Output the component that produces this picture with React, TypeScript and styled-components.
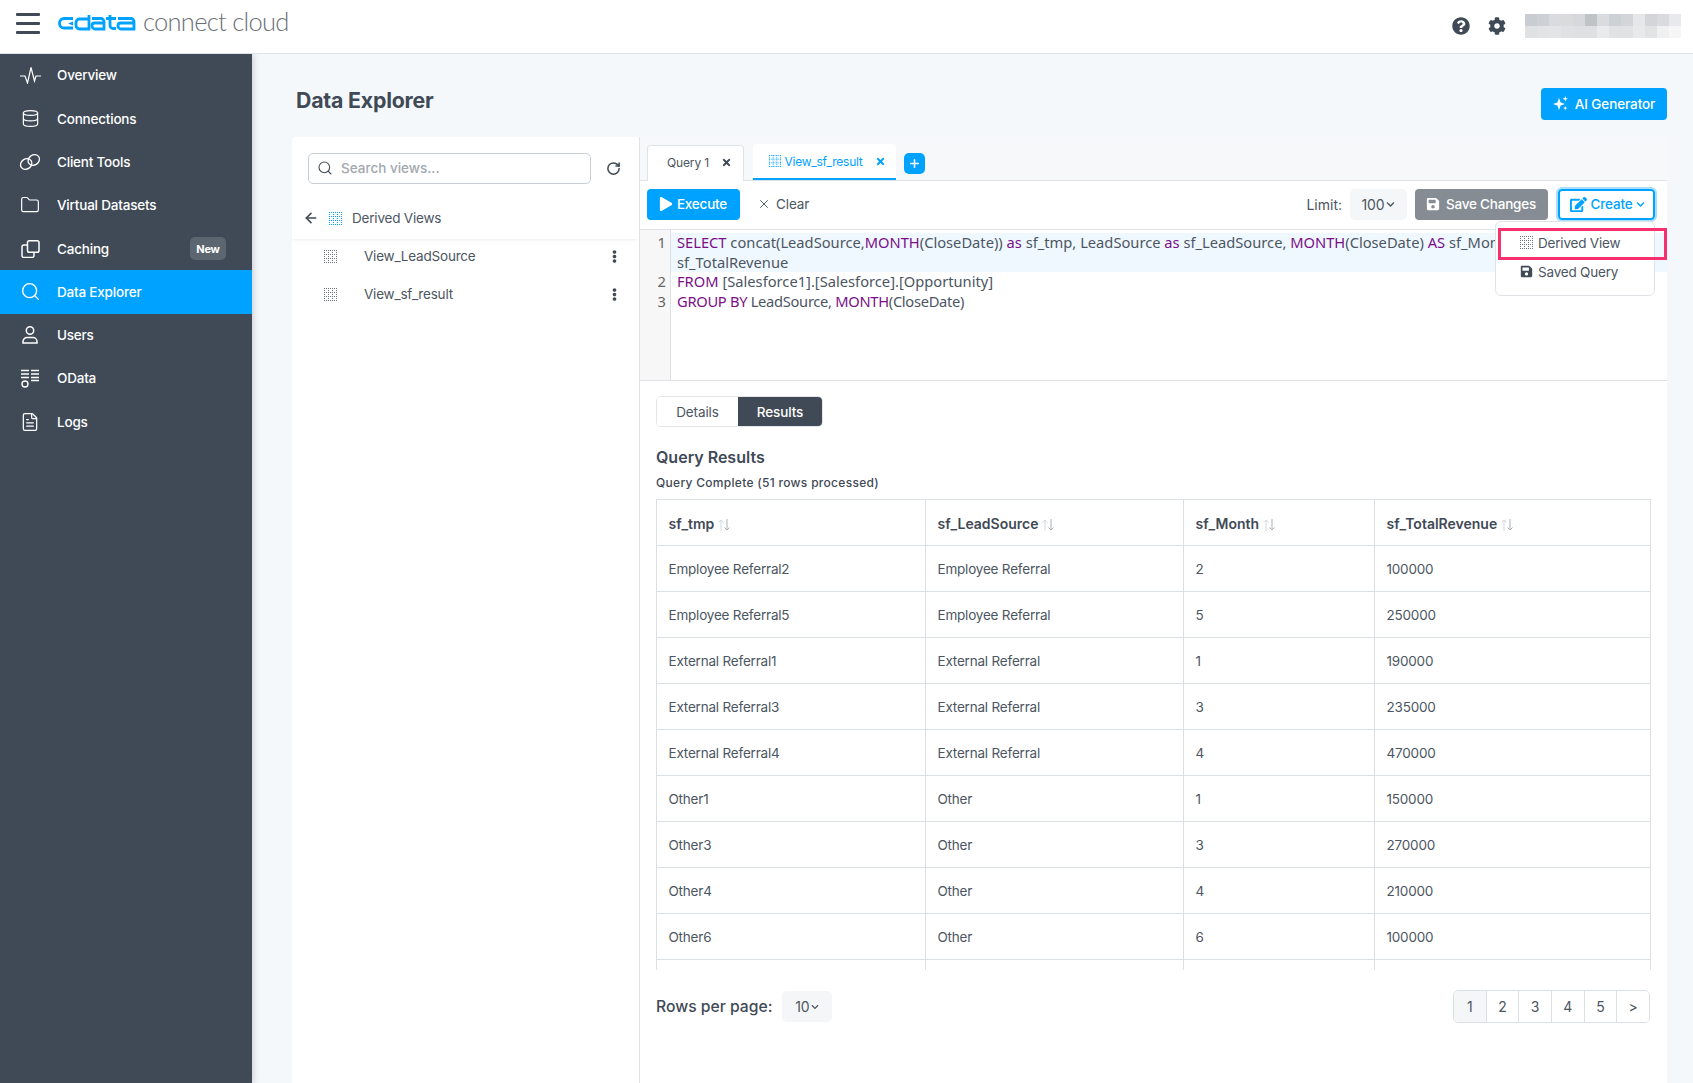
import React from "react";
import styled, { createGlobalStyle } from "styled-components";
import { Database, Folder, Search, FileText, X, ArrowLeft, RotateCw, Plus } from "lucide-react";
import { FaQuestionCircle, FaCog, FaSave, FaEdit, FaPlay, FaTimes, FaEllipsisV, FaChevronDown } from "react-icons/fa";

const Global = createGlobalStyle`
  html, body { margin: 0; padding: 0; height: 100%; background: #f5f8fb; }
  body { font-family: Inter, "Liberation Sans", sans-serif; color: #3f4a56; overflow: hidden; }
  * { box-sizing: border-box; }
`;

const Page = styled.div`
  width: 1693px; height: 1083px; display: flex; flex-direction: column; overflow: hidden; position: relative;
`;
const Header = styled.header`
  height: 54px; flex: none; background: #fff; border-bottom: 1px solid #dfe3e8;
  display: flex; align-items: center; padding: 0 12px 2px 16px; position: relative; z-index: 2;
`;
const Burger = styled.div`
  width: 24px; height: 21px; display: flex; flex-direction: column; justify-content: space-between;
  margin-top: -5px;
  span { display: block; height: 3px; border-radius: 1px; background: #3f4a56; }
`;
const LogoWrap = styled.div`display: flex; align-items: center; margin-left: 18px; height: 40px; margin-top: -5px;`;
const LogoText = styled.span`
  font-family: Lato, sans-serif; font-weight: 300; font-size: 25.5px; letter-spacing: -0.72px; color: #6a7077; margin-left: 7px; margin-top: -5px;
`;
const HeaderRight = styled.div`margin-left: auto; display: flex; align-items: center; color: #3f4a56;`;
const HeadIcon = styled.span`display: flex; width: 18px; margin-right: 18px; font-size: 18px;`;
const Mosaic = styled.div`
  width: 156px; height: 24px; margin-left: 1px; display: grid; grid-template-columns: repeat(13, 12px); grid-auto-rows: 12px;
`;
const MosaicCell = styled.i<{ $c: string }>`background: ${p => p.$c}; display: block;`;

const Body = styled.div`flex: 1; display: flex; min-height: 0;`;
const Sidebar = styled.nav`
  width: 252px; flex: none; background: #3f4a56; display: flex; flex-direction: column; box-shadow: 2px 0 6px rgba(40,50,60,.18); z-index: 1;
`;
const NavItem = styled.div<{ $active?: boolean }>`
  height: 43.3px; display: flex; align-items: center; padding: 0 26px .5px 19px;
  background: ${p => p.$active ? "#00a2ff" : "transparent"}; color: #fff; font-size: 13.5px; font-weight: 450; letter-spacing: -0.2px;
`;
const NavIcon = styled.span`width: 22px; margin-right: 16px; display: flex; justify-content: center; align-items: center;`;
const Badge = styled.span`
  margin-left: auto; width: 36px; height: 23px; border-radius: 5px; background: #5c6670; font-size: 11px; font-weight: 700; display: flex; align-items: center; justify-content: center;
`;

const Main = styled.main`flex: 1; min-width: 0; padding: 0 26px 0 40px; display: flex; flex-direction: column;`;
const TitleRow = styled.div`height: 83px; flex: none; display: flex; align-items: center; justify-content: space-between; padding: 0 0 0 4px;`;
const Title = styled.h1`font-size: 21.3px; font-weight: 700; margin: 9px 0 0; color: #3f4a56; letter-spacing: -0.2px;`;
const AIButton = styled.button`
  height: 32px; width: 126px; border: 0; border-radius: 4px; background: #00a2ff; color: #fff; font: 500 13.5px Inter, sans-serif; letter-spacing: -0.1px;
  display: flex; align-items: center; justify-content: center; gap: 7px; margin-top: 17px; padding: 0 0 1px;
`;
const Panels = styled.div`flex: 1; min-height: 0; display: grid; grid-template-columns: 348px 1fr; background: #fff; border-radius: 4px 4px 0 0;`;

const Left = styled.aside`border-right: 1px solid #dfe3e8; display: flex; flex-direction: column;`;
const SearchRow = styled.div`display: flex; align-items: center; padding: 16px 18px 0 16px; justify-content: space-between;`;
const SearchBox = styled.div`
  width: 283px; height: 31px; border: 1px solid #c9ced4; border-radius: 5px; display: flex; align-items: center; padding: 0 8px 1px; gap: 8px;
  color: #a2a8ae; font-size: 13.5px; font-weight: 500;
  svg { color: #3f4a56; }
`;
const ViewsHead = styled.div`
  height: 38px; margin-top: 17px; display: flex; align-items: center; padding: 0 0 4px 11px; font-size: 13.5px; letter-spacing: -0.2px; color: #4c5662;
  box-shadow: 0 3px 3px -2px rgba(60,70,80,.1);
`;
const HeadIconSlot = styled.span`margin-left: 10px; display: flex;`;
const ViewName = styled.span`margin-left: 10px;`;
const ViewItem = styled.div`
  height: 38px; display: flex; align-items: center; padding: 0 18px 0 32px; font-size: 13.5px; letter-spacing: -0.2px; color: #4c5662;
`;
const ViewItemName = styled.span`margin-left: 27px; flex: 1;`;
const ViewList = styled.div`margin-top: -2px;`;

const Right = styled.section`display: flex; flex-direction: column; min-width: 0; position: relative;`;
const TabStrip = styled.div`
  height: 44px; flex: none; background: #f7f8f9; border-bottom: 1px solid #dfe3e8; padding: 8px 0 0 7px; display: flex; align-items: flex-start; border-radius: 0 4px 0 0;
`;
const Tab = styled.div<{ $active?: boolean }>`
  height: 36px; background: #fff; display: flex; align-items: center; justify-content: center; font-size: 12px; border-radius: 4px 4px 0 0;
  ${p => p.$active
    ? "width: 143px; margin-left: 9px; color: #00a2ff; border-bottom: 2px solid #00a2ff; margin-top:-1px; gap: 4px; padding-left: 5px; letter-spacing: -0.25px;"
    : "width: 97px; color: #4c5662; border: 1px solid #dfe3e8; border-bottom: 0; gap: 12px; padding: 0 0 2px 8px; letter-spacing: -0.15px;"}
`;
const TabClose = styled.span`margin-left: 8px; display: flex;`;
const AddTab = styled.button`
  width: 21px; height: 21px; margin: 8px 0 0 8px; background: #00a2ff; border: 0; border-radius: 5px; color: #fff; display: flex; align-items: center; justify-content: center; padding: 0;
`;
const Toolbar = styled.div`height: 49px; flex: none; display: flex; align-items: center; padding: 0 12px 2px 7px; border-bottom: 1px solid #dfe3e8;`;
const Execute = styled.button`
  width: 93px; height: 31px; border: 0; border-radius: 4px; background: #00a2ff; color: #fff; font: 500 13.5px Inter, sans-serif; letter-spacing: -0.2px;
  display: flex; align-items: center; justify-content: center; gap: 4px; padding: 0 1px 0 0;
`;
const Clear = styled.button`
  margin-left: 17px; background: none; border: 0; color: #4c5662; font: 400 13.5px Inter, sans-serif; letter-spacing: -0.1px; display: flex; align-items: center; gap: 5px; padding: 0;
`;
const Limit = styled.span`margin-left: auto; font-size: 14px; color: #4c5662; margin-right: 8px;`;
const SelectBox = styled.div<{ $w: number }>`
  width: ${p => p.$w}px; height: 31px; border-radius: 5px; background: #f5f6f7; display: flex; align-items: center; justify-content: center; gap: 2px; font-size: 14px; letter-spacing: -0.2px; color: #4c5662;
`;
const SaveBtn = styled.button`
  width: 133px; height: 31px; margin-left: 8px; border: 0; border-radius: 4px; background: #858c93; color: #fff; font: 500 13.5px Inter, sans-serif; letter-spacing: -0.2px; display: flex; align-items: center; justify-content: center; gap: 6px; padding: 0 1px 0 0;
`;
const CreateBtn = styled.button`
  width: 97px; height: 31px; margin-left: 10px; border: 2px solid #00a2ff; outline: 2px solid #a9defd; border-radius: 4px; background: #fff; color: #00a2ff; font: 500 13.5px Inter, sans-serif; letter-spacing: -0.2px; display: flex; align-items: center; justify-content: center; gap: 4px; padding: 0 0 0 2px;
`;
const Menu = styled.div`
  position: absolute; left: 855px; top: 84px; width: 160px; height: 75px; background: #fff; border: 1px solid #dfe3e8; border-radius: 6px; z-index: 3; padding: 6px 0 0 24px; font-size: 13.5px; letter-spacing: -0.2px; color: #4c5662;
`;
const MenuItem = styled.div`height: 29px; display: flex; align-items: center; gap: 5px;`;
const Highlight = styled.div`
  position: absolute; left: 858px; top: 91px; width: 169px; height: 32px; border: 3px solid #f9306f; z-index: 4; pointer-events: none;
`;

const Editor = styled.div`
  height: 151px; flex: none; border-bottom: 1px solid #dfe3e8; display: grid; grid-template-columns: 31px 1fr; font-family: "Noto Sans", sans-serif; font-size: 14.7px; line-height: 19.7px; color: #4c5662; overflow: hidden;
`;
const Gutter = styled.div`
  background: #f7f7f7; border-right: 1px solid #dcdfe3; padding: 3px 4px 0 0; text-align: right; color: #666;
  div:first-child { height: 39.4px; }
`;
const Code = styled.div`padding-top: 3px; min-width: 0;`;
const CodeLine = styled.div<{ $hl?: boolean; $tight?: boolean }>`
  padding-left: 6px; white-space: nowrap; overflow: hidden; background: ${p => p.$hl ? "#f0f8ff" : "transparent"};
  letter-spacing: ${p => p.$tight ? "-0.3px" : "0"};
  b { font-weight: 400; color: #7a0f86; }
`;

const Results = styled.div`padding: 15px 17px 0 16px; display: flex; flex-direction: column; min-height: 0;`;
const Segment = styled.div`display: flex; width: 167px; height: 31px; border: 1px solid #e4e7ea; border-radius: 5px; overflow: hidden;`;
const SegBtn = styled.div<{ $on?: boolean }>`
  flex: ${p => p.$on ? "0 0 84px" : "1"}; display: flex; align-items: center; justify-content: center; font-size: 13.5px; letter-spacing: -0.1px; font-weight: ${p => p.$on ? 500 : 400};
  background: ${p => p.$on ? "#3f4a56" : "#fff"}; color: ${p => p.$on ? "#fff" : "#4c5662"};
`;
const H2 = styled.h2`font-size: 16px; font-weight: 600; line-height: 20px; margin: 20px 0 0; color: #3f4a56;`;
const Sub = styled.div`font-size: 12px; font-weight: 500; line-height: 16px; margin-top: 8px; letter-spacing: .3px; color: #3f4a56;`;
const TableClip = styled.div`height: 471px; margin: 8px -2px 0 0; overflow: hidden; flex: none;`;
const Table = styled.table`
  width: 994px; border-collapse: collapse; table-layout: fixed; font-size: 13.5px; letter-spacing: -0.2px; color: #4c5662;
  th, td { border: 1px solid #dbe0e5; padding: 0 11.500px; text-align: left; height: 46px; }
  th { font-weight: 600; font-size: 14px; letter-spacing: 0; color: #3f4a56; padding-top: 1px; }
`;
const Th = styled.th<{ $w: number }>`width: ${p => p.$w}px;`;
const SortIcon = styled.svg`vertical-align: -3px; margin-left: 3px;`;
const Pager = styled.div`margin-top: 20px; display: flex; align-items: center;`;
const PagerLabel = styled.span`font-size: 15.7px; font-weight: 500; margin-right: 10px; color: #3f4a56;`;
const Pages = styled.div`margin-left: auto; display: flex; height: 33px; width: 197px; border: 1px solid #dbe0e5; border-radius: 5px; overflow: hidden;`;
const PageCell = styled.div<{ $on?: boolean }>`
  flex: 1; display: flex; align-items: center; justify-content: center; font-size: 14px; color: #4c5662;
  background: ${p => p.$on ? "#f5f6f7" : "#fff"};
  & + & { border-left: 1px solid #dbe0e5; }
`;

const ViewIcon = ({ color = "#6b747d", size = 13 }: { color?: string; size?: number }) => (
  <svg width={size} height={size} viewBox="0 0 13 13" fill="none" stroke={color} strokeWidth="1" strokeDasharray="1 1">
    <path d="M0 .5H13M0 4.500H13M0 8.500H13M0 12.500H13M.5 0V13M4.500 0V13M8.500 0V13M12.500 0V13" />
  </svg>
);
const Pulse = () => (
  <svg width="21" height="17" viewBox="0 0 21 17" fill="none" stroke="#fff" strokeWidth="1.2">
    <path d="M0 9H5l2.500 7L11 .5l3.500 13.500 1.500-5H21" />
  </svg>
);
const Rings = () => (
  <svg width="22" height="18" viewBox="0 0 22 18" fill="none" stroke="#fff" strokeWidth="1.3">
    <ellipse cx="7.2" cy="11" rx="6" ry="5" transform="rotate(-35 7.2 11)" />
    <ellipse cx="14.8" cy="7" rx="6" ry="5" transform="rotate(-35 14.8 7)" />
  </svg>
);
const CopyIcon = () => (
  <svg width="19" height="18" viewBox="0 0 19 18" fill="none" stroke="#fff" strokeWidth="1.5">
    <rect x="6.500" y=".8" width="11.500" height="11.500" rx="1.800" />
    <path d="M6.500 5H3a2 2 0 0 0-2 2v8.500a2 2 0 0 0 2 2h8a2 2 0 0 0 2-2V12.500" />
  </svg>
);
const UserIcon = () => (
  <svg width="16" height="18" viewBox="0 0 16 18" fill="none" stroke="#fff" strokeWidth="1.5">
    <circle cx="8" cy="4.500" r="3.700" />
    <path d="M1 17v-1.500a4 4 0 0 1 4-4h6a4 4 0 0 1 4 4V17z" />
  </svg>
);
const ODataIcon = () => (
  <svg width="18" height="19" viewBox="0 0 18 19" fill="none" stroke="#fff" strokeWidth="1.4">
    <path d="M0 1.500H8M0 5H8M0 8.500H8M10 1.500H18M10 5H18M10 8.500H18M10 11.500H18" />
    <circle cx="4" cy="15" r="3" />
  </svg>
);
const Sparkle = () => (
  <svg width="15" height="15" viewBox="0 0 15 15" fill="#fff">
    <path d="M6 2l1.600 4.400L12 8l-4.400 1.600L6 14 4.400 9.600 0 8l4.400-1.600z" />
    <path d="M12.300 0l.7 2 2 .7-2 .7-.7 2-.7-2-2-.7 2-.7zM12.300 10l.6 1.500 1.500.6-1.500.6-.6 1.500-.6-1.500-1.500-.6 1.500-.6z" />
  </svg>
);
const Logo = () => (
  <svg width="78" height="16" viewBox="0 0 78 16" fill="none" stroke="#00a2ff" strokeWidth="2.800">
    <path d="M15 3.500H6a4.500 4.500 0 0 0-4.500 4.500v.5a4.500 4.500 0 0 0 4.500 4.500H15" />
    <path d="M15 6.500l-5 2 5 2z" fill="#00a2ff" stroke="none" />
    <path d="M31 0V14H21.500a3.500 3.500 0 0 1-3.500-3.500V7.500a3.500 3.500 0 0 1 3.500-3.500H31" />
    <path d="M34 3.500h9a3 3 0 0 1 3 3V14H37a3 3 0 0 1-3-3v-.5a2.500 2.500 0 0 1 2.500-2.500H46" />
    <path d="M52 0V10.500a3 3 0 0 0 3 3H58M48 3.500H58" />
    <path d="M60 3.500h13a3 3 0 0 1 3 3V14H63a3 3 0 0 1-3-3v-.5a2.500 2.500 0 0 1 2.500-2.500H76" />
  </svg>
);
const Sort = () => (
  <SortIcon width="14" height="14" viewBox="0 0 14 14" fill="none" strokeWidth="1">
    <path d="M4 13V2M1.500 4.500L4 2l2.500 2.500" stroke="#d3d8dd" />
    <path d="M10 1V12M7.500 9.500L10 12l2.500-2.500" stroke="#aab1b8" />
  </SortIcon>
);

const mosaic = ["#c9cdd2","#cdd0d4","#d9dbde","#d9dbdd","#d6d8db","#bfc3c6","#d9dbde","#cdd0d4","#d3d5d9","#e6e7e9","#d3d5d9","#d9dbde","#e8e9ec",
  "#dfe1e3","#e2e3e5","#e2e4e5","#e0e1e3","#dfe0e2","#dfe0e2","#e9eaec","#e1e2e4","#e1e2e4","#e8e9ea","#e2e3e5","#f0f0f1","#f6f6f7"];

const nav: { label: string; icon: React.ReactNode; active?: boolean; badge?: boolean }[] = [
  { label: "Overview", icon: <Pulse /> },
  { label: "Connections", icon: <Database size={19} strokeWidth={1.5} /> },
  { label: "Client Tools", icon: <Rings /> },
  { label: "Virtual Datasets", icon: <Folder size={20} strokeWidth={1.4} /> },
  { label: "Caching", icon: <CopyIcon />, badge: true },
  { label: "Data Explorer", icon: <Search size={21} strokeWidth={1.6} />, active: true },
  { label: "Users", icon: <UserIcon /> },
  { label: "OData", icon: <ODataIcon /> },
  { label: "Logs", icon: <FileText size={20} strokeWidth={1.5} /> },
];

const rows = [
  ["Employee Referral2", "Employee Referral", "2", "100000"],
  ["Employee Referral5", "Employee Referral", "5", "250000"],
  ["External Referral1", "External Referral", "1", "190000"],
  ["External Referral3", "External Referral", "3", "235000"],
  ["External Referral4", "External Referral", "4", "470000"],
  ["Other1", "Other", "1", "150000"],
  ["Other3", "Other", "3", "270000"],
  ["Other4", "Other", "4", "210000"],
  ["Other6", "Other", "6", "100000"],
  ["", "", "", ""],
];
const cols: [string, number][] = [["sf_tmp", 269], ["sf_LeadSource", 258], ["sf_Month", 191], ["sf_TotalRevenue", 276]];

export default function App() {
  return (
    <Page>
      <Global />
      <Header>
        <Burger><span /><span /><span /></Burger>
        <LogoWrap><Logo /><LogoText>connect cloud</LogoText></LogoWrap>
        <HeaderRight>
          <HeadIcon><FaQuestionCircle /></HeadIcon>
          <HeadIcon><FaCog /></HeadIcon>
          <Mosaic>{mosaic.map((c, i) => <MosaicCell key={i} $c={c} />)}</Mosaic>
        </HeaderRight>
      </Header>
      <Body>
        <Sidebar>
          {nav.map(n => (
            <NavItem key={n.label} $active={n.active}>
              <NavIcon>{n.icon}</NavIcon>
              {n.label}
              {n.badge && <Badge>New</Badge>}
            </NavItem>
          ))}
        </Sidebar>
        <Main>
          <TitleRow>
            <Title>Data Explorer</Title>
            <AIButton><Sparkle />AI Generator</AIButton>
          </TitleRow>
          <Panels>
            <Left>
              <SearchRow>
                <SearchBox><Search size={16} strokeWidth={1.6} />Search views...</SearchBox>
                <RotateCw size={15} strokeWidth={2.4} color="#3f4a56" />
              </SearchRow>
              <ViewsHead>
                <ArrowLeft size={16} strokeWidth={2.4} color="#3f4a56" />
                <HeadIconSlot><ViewIcon color="#00a2ff" /></HeadIconSlot>
                <ViewName>Derived Views</ViewName>
              </ViewsHead>
              <ViewList>
                {["View_LeadSource", "View_sf_result"].map(v => (
                  <ViewItem key={v}>
                    <ViewIcon />
                    <ViewItemName>{v}</ViewItemName>
                    <FaEllipsisV size={13} color="#3f4a56" />
                  </ViewItem>
                ))}
              </ViewList>
            </Left>
            <Right>
              <TabStrip>
                <Tab>Query 1 <FaTimes size={11} color="#3f4a56" /></Tab>
                <Tab $active><ViewIcon color="#00a2ff" size={12} /><span>View_sf_result</span><TabClose><FaTimes size={11} /></TabClose></Tab>
                <AddTab><Plus size={13} strokeWidth={3} /></AddTab>
              </TabStrip>
              <Toolbar>
                <Execute><FaPlay size={14} />Execute</Execute>
                <Clear><X size={14} strokeWidth={1.6} />Clear</Clear>
                <Limit>Limit:</Limit>
                <SelectBox $w={57}>100<FaChevronDown size={9} /></SelectBox>
                <SaveBtn><FaSave size={14} />Save Changes</SaveBtn>
                <CreateBtn><FaEdit size={17} />Create<FaChevronDown size={9} /></CreateBtn>
              </Toolbar>
              <Menu>
                <MenuItem><ViewIcon />Derived View</MenuItem>
                <MenuItem><FaSave size={13} color="#3f4a56" />Saved Query</MenuItem>
              </Menu>
              <Highlight />
              <Editor>
                <Gutter><div>1</div><div>2</div><div>3</div></Gutter>
                <Code>
                  <CodeLine $hl><b>SELECT</b> concat(LeadSource,<b>MONTH</b>(CloseDate)) <b>as</b> sf_tmp, LeadSource <b>as</b> sf_LeadSource, <b>MONTH</b>(CloseDate) <b>AS</b> sf_Month,</CodeLine>
                  <CodeLine $hl>sf_TotalRevenue</CodeLine>
                  <CodeLine><b>FROM</b> [Salesforce1].[Salesforce].[Opportunity]</CodeLine>
                  <CodeLine $tight><b>GROUP BY</b> LeadSource, <b>MONTH</b>(CloseDate)</CodeLine>
                </Code>
              </Editor>
              <Results>
                <Segment><SegBtn>Details</SegBtn><SegBtn $on>Results</SegBtn></Segment>
                <H2>Query Results</H2>
                <Sub>Query Complete (51 rows processed)</Sub>
                <TableClip>
                  <Table>
                    <thead>
                      <tr>{cols.map(([c, w]) => <Th key={c} $w={w}>{c}<Sort /></Th>)}</tr>
                    </thead>
                    <tbody>
                      {rows.map((r, ri) => <tr key={ri}>{r.map((c, i) => <td key={i}>{c}</td>)}</tr>)}
                    </tbody>
                  </Table>
                </TableClip>
                <Pager>
                  <PagerLabel>Rows per page:</PagerLabel>
                  <SelectBox $w={50}>10<FaChevronDown size={8} /></SelectBox>
                  <Pages>
                    {["1", "2", "3", "4", "5", ">"].map((p, i) => <PageCell key={p} $on={i === 0}>{p}</PageCell>)}
                  </Pages>
                </Pager>
              </Results>
            </Right>
          </Panels>
        </Main>
      </Body>
    </Page>
  );
}
